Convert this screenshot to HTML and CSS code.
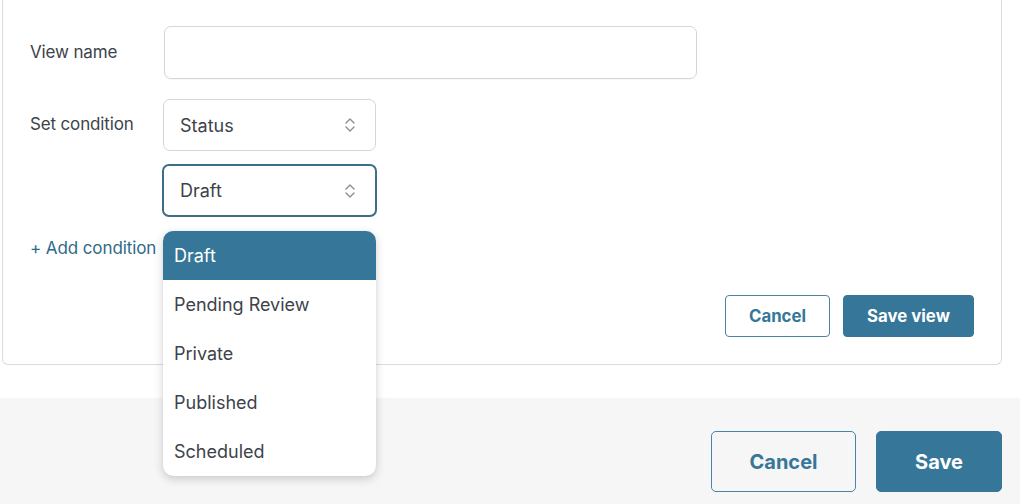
FILE: index.html
```html
<!DOCTYPE html>
<html lang="en">
<head>
<meta charset="utf-8">
<title>Save view</title>
<link rel="stylesheet" href="styles.css">
</head>
<body>
<div class="top">
  <div class="card">
    <div class="row">
      <label class="label">View name</label>
      <div class="input"></div>
    </div>
    <div class="row row-cond">
      <label class="label">Set condition</label>
      <div class="stack">
        <div class="select">
          <span>Status</span>
          <svg class="chev" width="12" height="16" viewBox="0 0 12 16"><path d="M2 6 L6 2 L10 6 M2 10 L6 14 L10 10" fill="none" stroke="#8c8f94" stroke-width="1.4" stroke-linecap="round" stroke-linejoin="round"/></svg>
        </div>
        <div class="select select-focus">
          <span>Draft</span>
          <svg class="chev" width="12" height="16" viewBox="0 0 12 16"><path d="M2 6 L6 2 L10 6 M2 10 L6 14 L10 10" fill="none" stroke="#8c8f94" stroke-width="1.4" stroke-linecap="round" stroke-linejoin="round"/></svg>
          <ul class="menu">
            <li class="active">Draft</li>
            <li>Pending Review</li>
            <li>Private</li>
            <li>Published</li>
            <li>Scheduled</li>
          </ul>
        </div>
      </div>
    </div>
    <div class="add">+ Add condition</div>
    <div class="actions">
      <button class="btn btn-outline">Cancel</button>
      <button class="btn btn-primary">Save view</button>
    </div>
  </div>
</div>
<div class="footer">
  <button class="btn btn-outline btn-lg">Cancel</button>
  <button class="btn btn-primary btn-lg">Save</button>
</div>
</body>
</html>
```

FILE: styles.css
```css
* { box-sizing: border-box; }
html, body { margin: 0; padding: 0; }
body {
  width: 1020px;
  height: 504px;
  overflow: hidden;
  background: #ffffff;
  font-family: Inter, "Noto Sans", "Liberation Sans", sans-serif;
  color: #3c434a;
}
.top {
  padding: 0 18px 33px 2px;
}
.card {
  width: 1000px;
  border: 1px solid #dcdcde;
  border-top: none;
  border-radius: 0 0 6px 6px;
  padding: 26px 27px 27px 27px;
}
.row {
  display: flex;
  align-items: flex-start;
}
.label {
  width: 134px;
  flex: none;
  font-size: 17px;
  line-height: 20px;
  color: #3c434a;
  padding-left: 0;
  letter-spacing: -0.15px;
}
.row:first-child .label { padding-top: 16px; }
.input {
  width: 533px;
  height: 53px;
  border: 1px solid #d4d6d9;
  border-radius: 7px;
  box-shadow: 0 1px 2px rgba(0,0,0,0.04);
}
.row-cond { margin-top: 20px; }
.row-cond .label { padding-top: 15px; }
.stack {
  display: flex;
  flex-direction: column;
  gap: 13px;
  margin-left: -1px;
}
.select {
  position: relative;
  width: 213px;
  height: 52px;
  border: 1px solid #d4d6d9;
  border-radius: 7px;
  display: flex;
  align-items: center;
  justify-content: space-between;
  padding: 0 19px 0 16px;
  font-size: 18px;
  color: #3c434a;
}
.select-focus {
  height: 53px;
  border: 2px solid #3c6e88;
  width: 215px;
  margin-left: -1px;
  padding: 0 19px 0 16px;
}
.chev { display: block; }
.menu {
  position: absolute;
  left: -1px;
  top: 65px;
  width: 213px;
  margin: 0;
  padding: 0;
  list-style: none;
  background: #fff;
  border-radius: 10px;
  box-shadow: 0 3px 10px rgba(0,0,0,0.18), 0 0 1px rgba(0,0,0,0.15);
  overflow: hidden;
  z-index: 5;
}
.menu li {
  height: 49px;
  display: flex;
  align-items: center;
  padding-left: 11px;
  font-size: 18px;
  color: #3c434a;
}
.menu li.active {
  background: #367699;
  color: #fff;
}
.add {
  margin-top: 20px;
  font-size: 17px;
  line-height: 22px;
  color: #2e6a8a;
  letter-spacing: -0.1px;
}
.actions {
  display: flex;
  justify-content: flex-end;
  gap: 13px;
  margin-top: 36px;
  padding-right: 0;
}
.btn {
  font-family: Inter, "Noto Sans", "Liberation Sans", sans-serif;
  font-weight: 700;
  border-radius: 4px;
  cursor: pointer;
}
.actions .btn {
  height: 42px;
  font-size: 16.8px;
}
.actions .btn-outline { width: 105px; }
.actions .btn-primary { width: 131px; }
.btn-outline {
  background: #fff;
  border: 1px solid #4a84a3;
  color: #367699;
}
.btn-primary {
  background: #367699;
  border: 1px solid #367699;
  color: #fff;
}
.footer {
  height: 106px;
  background: #f6f6f6;
  display: flex;
  justify-content: flex-end;
  align-items: flex-start;
  gap: 20px;
  padding: 33px 18px 0 0;
}
.btn-lg {
  height: 61px;
  font-size: 20px;
  border-radius: 5px;
}
.footer .btn-outline { width: 145px; background: #f6f6f6; border-color: #4a84a3; }
.footer .btn-primary { width: 126px; }
```
